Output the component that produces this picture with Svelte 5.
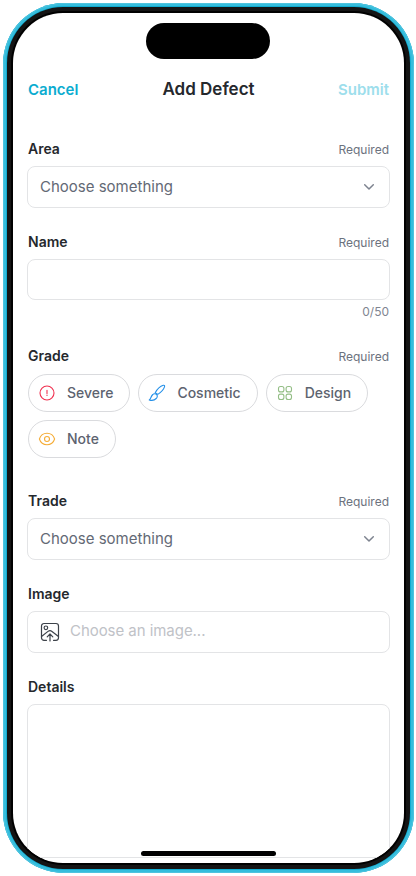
<script>
  let area = '';
  let name = '';
  let trade = '';
  let details = '';

  const maxLength = 50;

  const grades = [
    { id: 'severe', label: 'Severe', color: '#f0304f' },
    { id: 'cosmetic', label: 'Cosmetic', color: '#2490e8' },
    { id: 'design', label: 'Design', color: '#94be86' },
    { id: 'note', label: 'Note', color: '#f5ad38' }
  ];

  let selectedGrade = '';
</script>

<div class="phone">
  <div class="bezel">
    <div class="screen">
      <div class="island"></div>

      <header class="navbar">
        <button type="button" class="nav-button">Cancel</button>
        <h1>Add Defect</h1>
        <button type="button" class="nav-button submit">Submit</button>
      </header>

      <form class="form">
        <div class="field">
          <div class="label-row">
            <span class="label">Area</span>
            <span class="required">Required</span>
          </div>
          <button type="button" class="box">
            <span class="value">{area || 'Choose something'}</span>
            <svg class="chevron" width="12" height="8" viewBox="0 0 12 8">
              <path d="M1.700 1.800 6 6l4.300-4.200" />
            </svg>
          </button>
        </div>

        <div class="field name-field">
          <div class="label-row">
            <label class="label" for="name">Name</label>
            <span class="required">Required</span>
          </div>
          <input id="name" class="box" maxlength={maxLength} bind:value={name} />
          <div class="counter">{name.length}/{maxLength}</div>
        </div>

        <div class="field grade-field">
          <div class="label-row">
            <span class="label">Grade</span>
            <span class="required">Required</span>
          </div>
          <div class="pills">
            {#each grades as grade}
              <button
                type="button"
                class="pill"
                class:selected={selectedGrade === grade.id}
                on:click={() => selectedGrade = grade.id}
              >
                <svg width="18" height="18" viewBox="0 0 18 18" style="color: {grade.color}">
                  {#if grade.id === 'severe'}
                    <circle cx="9" cy="9" r="7" />
                    <path d="M9 6.300v3.200M9 11v.4" />
                  {:else if grade.id === 'cosmetic'}
                    <path d="M7.200 8.700C9 5.500 12.500 2.200 15.300 1.300c1.200-.3 1.600.5 1.200 1.600-.9 2.600-4 5.800-6.700 7.500z" />
                    <path d="M4.800 10.500c1.200-1.300 3-.9 3.900.1s.8 2.800-.5 3.900c-1.600 1.700-4.600 2.200-7 1.400 1.800-.8 1.500-3.500 3.600-5.400z" />
                  {:else if grade.id === 'design'}
                    <rect x="2.500" y="2.500" width="5.400" height="5.400" rx="2" />
                    <rect x="10.100" y="2.500" width="5.400" height="5.400" rx="2" />
                    <rect x="2.500" y="10.100" width="5.400" height="5.400" rx="2" />
                    <rect x="10.100" y="10.100" width="5.400" height="5.400" rx="2" />
                  {:else}
                    <path d="M1.400 9C2.600 5.200 5.500 3.300 9 3.300S15.400 5.200 16.600 9c-1.200 3.800-4.100 5.700-7.600 5.700S2.600 12.800 1.400 9z" />
                    <circle cx="9" cy="9" r="2.500" />
                  {/if}
                </svg>
                <span class="pill-label">{grade.label}</span>
              </button>
            {/each}
          </div>
        </div>

        <div class="field">
          <div class="label-row">
            <span class="label">Trade</span>
            <span class="required">Required</span>
          </div>
          <button type="button" class="box">
            <span class="value">{trade || 'Choose something'}</span>
            <svg class="chevron" width="12" height="8" viewBox="0 0 12 8">
              <path d="M1.700 1.800 6 6l4.300-4.200" />
            </svg>
          </button>
        </div>

        <div class="field">
          <div class="label-row">
            <span class="label">Image</span>
          </div>
          <button type="button" class="box image-box">
            <svg class="image-icon" width="20" height="20" viewBox="0 0 20 20">
              <path d="M6.500 18.300H4a2.500 2.500 0 0 1-2.500-2.500V4A2.500 2.500 0 0 1 4 1.500h12A2.500 2.500 0 0 1 18.500 4v11.800a2.500 2.500 0 0 1-2.500 2.500h-2.500" />
              <circle cx="5.900" cy="5.800" r="1.800" />
              <path d="M1.500 14.500 8 9.400q2-1.500 4 0l6.500 5.100M10 19v-6.500M7.200 14.800 10 12l2.800 2.800" />
            </svg>
            <span class="placeholder">Choose an image...</span>
          </button>
        </div>

        <div class="field">
          <div class="label-row">
            <label class="label" for="details">Details</label>
          </div>
          <textarea id="details" class="box" bind:value={details}></textarea>
        </div>
      </form>

      <div class="home-indicator"></div>
    </div>
  </div>
</div>

<style>
  :global(body) {
    margin: 0;
    background: #fff;
    overflow: hidden;
  }

  .phone {
    box-sizing: border-box;
    width: 411px;
    height: 870px;
    margin: 3px 0 0 3px;
    padding: 4px;
    border-radius: 61px;
    background: #10abd0;
    box-shadow: inset 0 0 0 1px #4fc3de, inset 0 0 0 3px #35bddc;
    font-family: Inter, "Liberation Sans", sans-serif;
  }

  .bezel {
    box-sizing: border-box;
    height: 100%;
    padding: 6px;
    border-radius: 56px;
    background: #141414;
  }

  .screen {
    position: relative;
    height: 100%;
    border-radius: 50px;
    background: #fff;
    box-shadow: 0 0 0 2px #000;
    overflow: hidden;
  }

  .island {
    width: 124px;
    height: 36px;
    margin: 10px auto 0 133px;
    border-radius: 18px;
    background: #000;
  }

  .navbar {
    display: grid;
    grid-template-columns: 1fr auto 1fr;
    align-items: center;
    height: 40px;
    margin-top: 10px;
    padding: 0 15px;
  }

  h1 {
    margin: 0;
    color: #25282d;
    font-size: 17px;
    font-weight: 600;
    line-height: 20px;
  }

  button {
    margin: 0;
    border: none;
    background: none;
    font-family: inherit;
    cursor: pointer;
  }

  .nav-button {
    justify-self: start;
    padding: 2px 0 0;
    color: #0bacd0;
    font-size: 15px;
    font-weight: 600;
    line-height: 20px;
  }

  .nav-button.submit {
    justify-self: end;
    color: #9ddeec;
  }

  .form {
    display: flex;
    flex-direction: column;
    gap: 25px;
    padding: 31px 14px 0;
  }

  .label-row {
    display: flex;
    justify-content: space-between;
    align-items: center;
    height: 18px;
    margin-bottom: 8px;
    padding: 0 1px;
  }

  .label {
    padding-bottom: 2px;
    color: #25282d;
    font-size: 14px;
    font-weight: 600;
  }

  .required,
  .counter {
    color: #6c727e;
    font-size: 12px;
  }

  .box {
    display: flex;
    align-items: center;
    justify-content: space-between;
    box-sizing: border-box;
    width: 100%;
    height: 42px;
    padding: 0 14px 0 12px;
    border: 1px solid #e3e4e6;
    border-radius: 8px;
    background: #fff;
    font-family: inherit;
    font-size: 15px;
    outline: none;
    resize: none;
  }

  input.box {
    height: 41px;
  }

  textarea.box {
    display: block;
    height: 154px;
  }

  .value {
    padding-bottom: 2px;
    color: #636975;
  }

  .placeholder {
    padding-bottom: 3px;
    color: #c0c2c7;
    letter-spacing: -0.05px;
  }

  .image-box {
    justify-content: flex-start;
    gap: 10px;
  }

  svg {
    display: block;
    flex: none;
    fill: none;
    stroke: currentColor;
    stroke-width: 1.1;
    stroke-linecap: round;
    stroke-linejoin: round;
  }

  .chevron {
    color: #7d838f;
    stroke-width: 1.5;
  }

  .image-icon {
    color: #3d424a;
    stroke-width: 1.2;
  }

  .counter {
    height: 16px;
    margin-top: 4px;
    padding-right: 1px;
    color: #7f8591;
    line-height: 16px;
    text-align: right;
  }

  .name-field {
    margin-bottom: 2px;
  }

  .grade-field {
    margin-bottom: 9px;
  }

  .pills {
    display: flex;
    flex-wrap: wrap;
    gap: 8px;
    margin-top: 9px;
    padding: 0 1px;
  }

  .pill {
    display: flex;
    align-items: center;
    gap: 11px;
    box-sizing: border-box;
    height: 38px;
    padding: 0 16px 0 9px;
    border: 1px solid #dadbde;
    border-radius: 19px;
    background: #fff;
    color: #5d636f;
    font-size: 14px;
    font-weight: 500;
  }

  .pill-label {
    padding-bottom: 2px;
  }

  .pill.selected {
    border-color: #0bacd0;
  }

  .home-indicator {
    position: absolute;
    bottom: 7px;
    left: 128px;
    width: 135px;
    height: 5px;
    border-radius: 3px;
    background: #000;
  }
</style>
